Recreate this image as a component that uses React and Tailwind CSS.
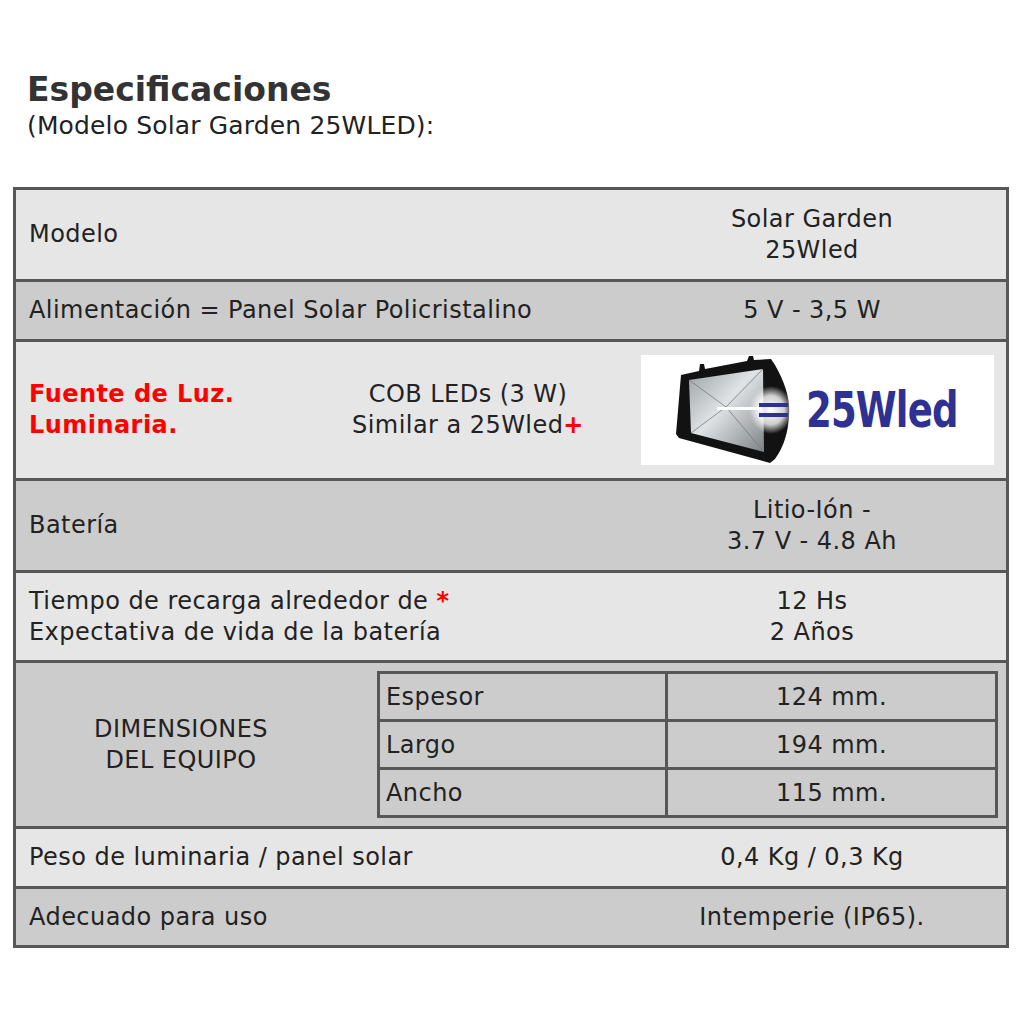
import React from "react";

const font = { fontFamily: '"DejaVu Sans", Verdana, Tahoma, sans-serif' };

const Row = ({ bg, h, last, children }) => (
  <div
    className={`flex items-center ${bg} ${h} ${last ? "" : "border-b-[3px] border-[#575757]"}`}
  >
    {children}
  </div>
);

const Value = ({ children }) => (
  <div className="w-[388px] shrink-0 text-center leading-[31px]">{children}</div>
);

const Label = ({ children }) => (
  <div className="flex-1 pl-[13px] leading-[31px]">{children}</div>
);

const Floodlight = () => (
  <div className="flex h-[110px] w-[353px] items-center bg-white pl-[30px]">
    <svg width="130" height="110" viewBox="0 0 130 110" className="shrink-0">
      <defs>
        <linearGradient id="refl" x1="0" y1="0" x2="1" y2="1">
          <stop offset="0" stopColor="#9aa0a4" />
          <stop offset="0.45" stopColor="#dfe3e5" />
          <stop offset="1" stopColor="#7d8286" />
        </linearGradient>
        <radialGradient id="glow" cx="0.5" cy="0.5" r="0.5">
          <stop offset="0" stopColor="#ffffff" />
          <stop offset="0.6" stopColor="#ffffff" stopOpacity="0.8" />
          <stop offset="1" stopColor="#ffffff" stopOpacity="0" />
        </radialGradient>
      </defs>
      <path
        d="M10 20 L28 16 L29 9 L33 9 L34 14 L76 6 L78 1 L82 1 L83 5 L100 4 L104 10 Q120 38 118 60 Q117 86 104 104 L99 108 L8 83 L5 79 Z"
        fill="#121212"
      />
      <path d="M18 25 L92 14 L93 97 L20 78 Z" fill="url(#refl)" />
      <path d="M18 25 L55 52 L20 78 M92 14 L55 52 L93 97" stroke="#767b80" strokeWidth="0.8" fill="none" />
      <ellipse cx="100" cy="55" rx="22" ry="24" fill="url(#glow)" />
      <rect x="46" y="52" width="44" height="3" fill="#ffffff" />
      <rect x="88" y="48" width="29" height="4" fill="#2e3192" />
      <rect x="88" y="58" width="29" height="4" fill="#2e3192" />
    </svg>
    <span
      className="ml-[5px] inline-block origin-left scale-x-[0.84] text-[49px] font-bold leading-none tracking-[-1px] text-[#2e3192]"
      style={{ fontFamily: '"DejaVu Sans Condensed", "Liberation Sans", sans-serif' }}
    >
      25Wled
    </span>
  </div>
);

export default function App() {
  return (
    <div className="min-h-screen bg-white pt-[68px] text-[24px] tracking-[0.45px] text-[#222]" style={font}>
      <div className="pl-[27px]">
        <h1 className="text-[33px] font-bold leading-[44px] tracking-normal text-[#333]">Especificaciones</h1>
        <p className="text-[25px] leading-[28px] tracking-[0.15px]">(Modelo Solar Garden 25WLED):</p>
      </div>

      <div className="ml-[13px] mt-[47px] w-[996px] border-[3px] border-[#575757]">
        <Row bg="bg-[#e6e6e6]" h="h-[92px]">
          <Label>Modelo</Label>
          <Value>
            Solar Garden
            <br />
            25Wled
          </Value>
        </Row>

        <Row bg="bg-[#cccccc]" h="h-[60px]">
          <Label>Alimentación = Panel Solar Policristalino</Label>
          <Value>5 V - 3,5 W</Value>
        </Row>

        <Row bg="bg-[#e6e6e6]" h="h-[139px]">
          <div className="w-[302px] shrink-0 pl-[13px] font-bold leading-[31px] text-[#ff0000]">
            Fuente de Luz.
            <br />
            Luminaria.
          </div>
          <div className="w-[300px] shrink-0 text-center leading-[31px]">
            COB LEDs (3 W)
            <br />
            Similar a 25Wled<span className="font-bold text-[#ff0000]">+</span>
          </div>
          <div className="flex flex-1 justify-center pl-[10px]">
            <Floodlight />
          </div>
        </Row>

        <Row bg="bg-[#cccccc]" h="h-[92px]">
          <Label>Batería</Label>
          <Value>
            Litio-Ión -
            <br />
            3.7 V - 4.8 Ah
          </Value>
        </Row>

        <Row bg="bg-[#e6e6e6]" h="h-[90px]">
          <Label>
            Tiempo de recarga alrededor de <span className="font-bold text-[#ff0000]">*</span>
            <br />
            Expectativa de vida de la batería
          </Label>
          <Value>
            12 Hs
            <br />
            2 Años
          </Value>
        </Row>

        <Row bg="bg-[#cccccc]" h="h-[166px]">
          <div className="w-[330px] shrink-0 text-center leading-[31px]">
            DIMENSIONES
            <br />
            DEL EQUIPO
          </div>
          <div className="flex-1 pl-[31px] pr-[8px]">
            <div className="border-[3px] border-[#575757]">
              {[
                ["Espesor", "124 mm."],
                ["Largo", "194 mm."],
                ["Ancho", "115 mm."],
              ].map(([k, v], i) => (
                <div
                  key={k}
                  className={`flex items-center ${i < 2 ? "h-[48px] border-b-[3px] border-[#575757]" : "h-[45px]"}`}
                >
                  <div className="flex h-full w-[288px] items-center border-r-[3px] border-[#575757] pl-[6px]">
                    {k}
                  </div>
                  <div className="flex-1 text-center">{v}</div>
                </div>
              ))}
            </div>
          </div>
        </Row>

        <Row bg="bg-[#e6e6e6]" h="h-[60px]">
          <Label>Peso de luminaria / panel solar</Label>
          <Value>0,4 Kg / 0,3 Kg</Value>
        </Row>

        <Row bg="bg-[#cccccc]" h="h-[56px]" last>
          <Label>Adecuado para uso</Label>
          <Value>Intemperie (IP65).</Value>
        </Row>
      </div>
    </div>
  );
}
